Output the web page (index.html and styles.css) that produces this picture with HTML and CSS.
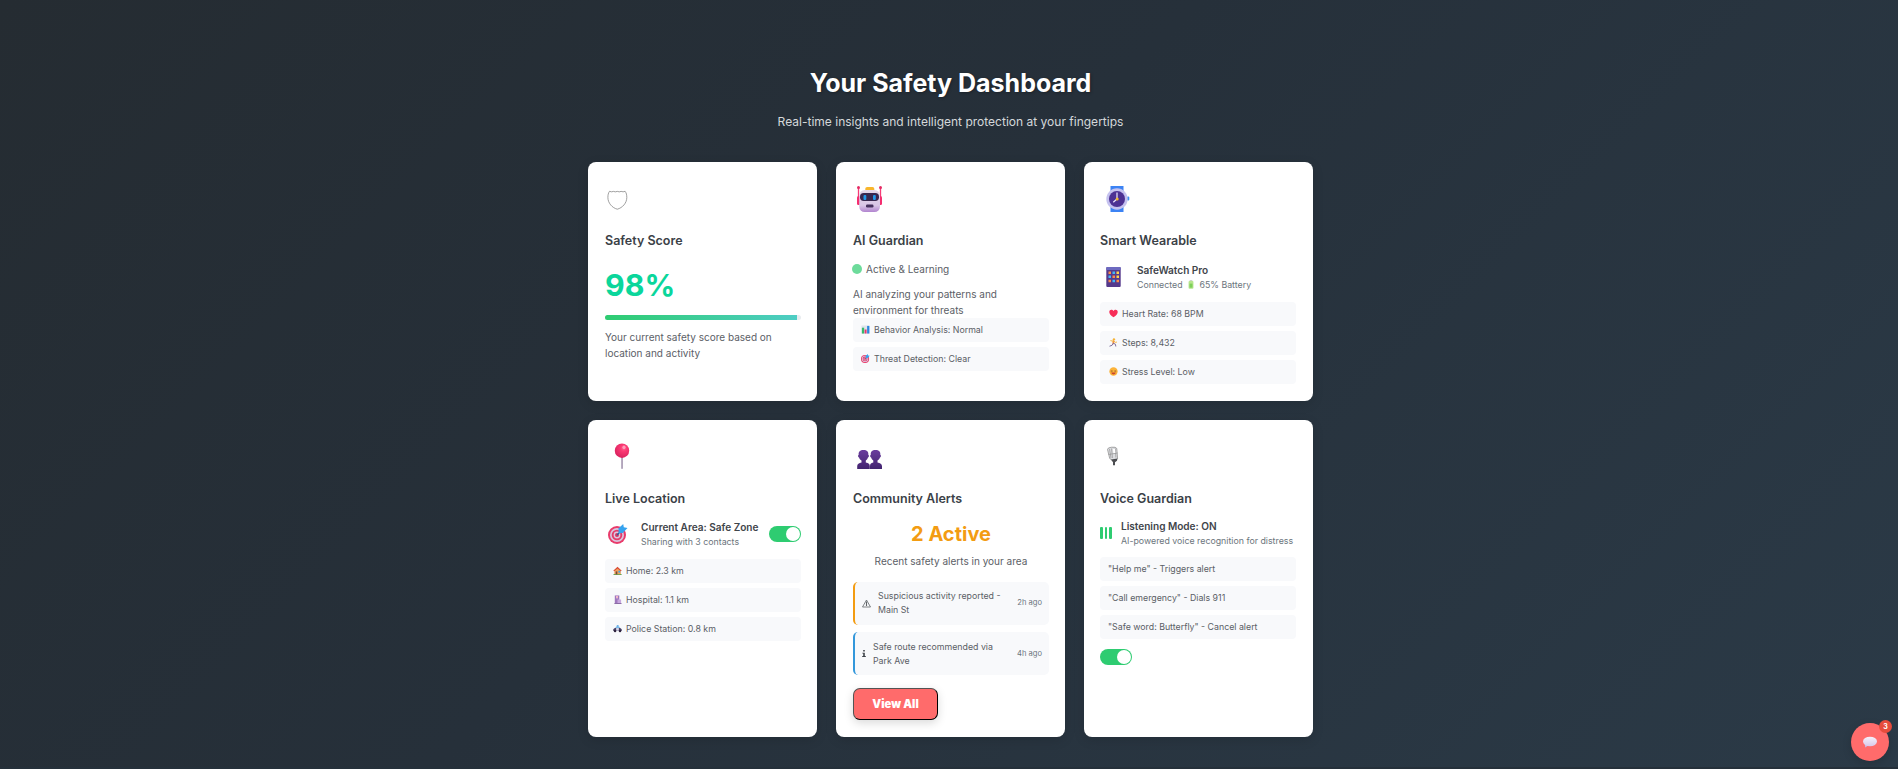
FILE: index.html
```html
<!DOCTYPE html>
<html lang="en">
<head>
<meta charset="utf-8">
<title>Your Safety Dashboard</title>
<link rel="stylesheet" href="styles.css">
</head>
<body>
<main class="dashboard">
  <h1 class="heading"><span>Your Safety Dashboard</span></h1>
  <p class="subheading"><span>Real-time insights and intelligent protection at your fingertips</span></p>
  <div class="grid">
    <section class="card">
      <div class="card-icon"><svg width="26" height="40" viewBox="0 0 26 40" fill="none" stroke="#777" stroke-width=".7"><path d="M4.500 12.300q2 1 4 .1q1.800.9 3.800 0q2 .9 3.800 0q2 .9 4-.1C21.400 14 21.800 16 21.800 18.500c0 5.500-4.300 10.300-9.500 11.700C7.100 28.800 2.900 24 2.900 18.500c0-2.500.4-4.500 1.600-6.200z"/></svg></div>
      <h2 class="card-title">Safety Score</h2>
      <div class="score">98%</div>
      <div class="progress"><div class="progress-fill" style="width:98%"></div></div>
      <p class="copy">Your current safety score based on location and activity</p>
    </section>

    <section class="card">
      <div class="card-icon"><svg width="30" height="40" viewBox="0 0 30 40"><defs><linearGradient id="rb" x1="0" y1="0" x2="0" y2="1"><stop offset="0" stop-color="#e3d8ea"/><stop offset=".7" stop-color="#d9c5e6"/><stop offset="1" stop-color="#b184cf"/></linearGradient></defs><path d="M5.500 9v17M27.500 9v17" stroke="#f53b76" stroke-width="1.300"/><circle cx="5.500" cy="8.500" r="1.500" fill="#e52b63"/><circle cx="27.500" cy="8.500" r="1.500" fill="#e52b63"/><rect x="4" y="17" width="3.500" height="9" rx="1.500" fill="#f42e70"/><rect x="25.500" y="17" width="3.500" height="9" rx="1.500" fill="#f42e70"/><rect x="12.300" y="8" width="9" height="5" rx="1.800" fill="#f8b62c"/><rect x="6.200" y="11" width="20.800" height="22" rx="5.500" fill="url(#rb)"/><rect x="7" y="14" width="19" height="8" rx="3.700" fill="#37274f"/><rect x="10.500" y="16" width="2.800" height="5" rx="1" fill="#2196e8"/><rect x="20" y="16" width="2.800" height="5" rx="1" fill="#2196e8"/><rect x="13" y="25.500" width="7.500" height="3" rx="1.200" fill="#46305e"/></svg></div>
      <h2 class="card-title">AI Guardian</h2>
      <div class="status"><span class="status-dot"></span>Active &amp; Learning</div>
      <p class="copy copy-tight">AI analyzing your patterns and environment for threats</p>
      <ul class="list">
        <li class="item"><svg class="emoji" viewBox="0 0 10 10"><rect x=".5" y=".5" width="9" height="9" rx=".6" fill="#dfe4ec"/><path d="M1 3h2.500v6.500H1z" fill="#37b96b"/><path d="M4 5h2.200v4.500H4z" fill="#e5366f"/><path d="M6.800 1h2.500v8.500H6.800z" fill="#2c86e0"/></svg>Behavior Analysis: Normal</li>
        <li class="item"><svg class="emoji" viewBox="0 0 20 20"><use href="#target"/></svg>Threat Detection: Clear</li>
      </ul>
    </section>

    <section class="card card-last">
      <div class="card-icon"><svg width="32" height="40" viewBox="0 0 32 40"><path d="M10.500 7h13v7h-13zM10.500 26h13v7h-13z" fill="#3c83f4"/><rect x="27" y="17.500" width="2.300" height="4" rx="1" fill="#3d91f2"/><circle cx="17" cy="20" r="10.700" fill="#c5c2ef"/><circle cx="17" cy="20" r="8" fill="#4d3193"/><path d="M17 13.500V20l-3.700 3.300" stroke="#eee6ff" stroke-width="1.200" fill="none"/><circle cx="17.200" cy="20" r="1.500" fill="#efb832"/></svg></div>
      <h2 class="card-title">Smart Wearable</h2>
      <div class="device">
        <svg class="device-icon" width="26" height="22" viewBox="0 0 26 22"><rect x="6.300" y="1" width="14.400" height="20" rx="1" fill="#55398b"/><path d="M6.300 2q0-1 1-1h12.400q1 0 1 1v2H6.300z" fill="#6d6ac0"/><g fill="#fb8a48"><path d="M8.500 5.500h2.500v2.500H8.500zM12.500 9.500H15V12h-2.500zM8.500 13.700h2.500v2.500H8.500zM16.500 13.700H19v2.500h-2.500z"/></g><g fill="#42b8f7"><path d="M12.500 5.500H15V8h-2.500zM8.500 9.500h2.500V12H8.500zM12.500 13.700H15v2.500h-2.500z"/></g><path d="M16.500 5.500H19V8h-2.500zM16.500 9.500H19V12h-2.500z" fill="#ffd24b"/></svg>
        <div><div class="strong">SafeWatch Pro</div><div class="muted">Connected <svg class="battery" viewBox="0 0 8 10"><rect x="2.500" y=".3" width="3" height="1.500" fill="#b8c4b5"/><rect x="1.300" y="1.200" width="5.400" height="8.500" rx="1" fill="#b7e58e"/><path d="M2.400 4h3.200v4.500H2.400z" fill="#7ed05a"/></svg> 65% Battery</div></div>
      </div>
      <ul class="list">
        <li class="item item-wide"><svg class="emoji" viewBox="0 0 10 10"><path d="M5 9.300C2 7.300.3 5.300.3 3.300.3.500 3.800.2 5 2.300 6.200.2 9.700.5 9.700 3.300c0 2-1.700 4-4.700 6z" fill="#f72d58"/></svg>Heart Rate: 68 BPM</li>
        <li class="item item-wide"><svg class="emoji" viewBox="0 0 10 10" fill="none" stroke-linecap="round"><circle cx="5.500" cy="1.500" r="1.300" fill="#f5b335"/><path d="M5 3.500L4.800 6" stroke="#f7913f" stroke-width="2"/><path d="M4.500 3.500L2 3M5.500 3.500l2 1.500 1-.5" stroke="#f5b335"/><path d="M4.700 6L3.500 8 1 9M5.200 6l2 1 .3 2" stroke="#7b6b9c" stroke-width="1.100"/></svg>Steps: 8,432</li>
        <li class="item item-wide"><svg class="emoji" viewBox="0 0 10 10"><circle cx="5" cy="5" r="4.600" fill="#fbb238"/><path d="M2 4.500h2M6 4.500h2" stroke="#6b4226" stroke-width=".8"/><path d="M2.500 6h5q-.5 2.300-2.500 2.300T2.500 6" fill="#c9472f"/></svg>Stress Level: Low</li>
      </ul>
    </section>

    <section class="card">
      <div class="card-icon"><svg width="30" height="40" viewBox="0 0 30 40"><defs><radialGradient id="pin" cx=".62" cy=".32" r=".65"><stop offset="0" stop-color="#ff6390"/><stop offset=".35" stop-color="#fb3a74"/><stop offset="1" stop-color="#dc2561"/></radialGradient></defs><rect x="16.200" y="19" width="1.700" height="13" rx=".8" fill="#a99bb4"/><circle cx="17" cy="13.700" r="7.200" fill="url(#pin)"/><ellipse cx="19" cy="10.300" rx="1.600" ry="1.900" fill="#ff9db9"/></svg></div>
      <h2 class="card-title">Live Location</h2>
      <div class="location">
        <svg class="device-icon" width="26" height="22" viewBox="-3 -1 26 22"><g id="target"><circle cx="9" cy="11" r="9" fill="#e93b6b"/><circle cx="9" cy="11" r="7" fill="#d9c7de"/><circle cx="9" cy="11" r="5.300" fill="#e33c6b"/><circle cx="9" cy="11" r="3.400" fill="#dcc7df"/><circle cx="9" cy="11" r="2" fill="#d83564"/><path d="M9 11l6-6" stroke="#23659f" stroke-width="1.200"/><path d="M10.800 9.200l-.4-4.700L15.200 0l.6 3.200 3.700.9-4.700 5z" fill="#35a3ef"/></g></svg>
        <div class="grow"><div class="strong">Current Area: Safe Zone</div><div class="muted">Sharing with 3 contacts</div></div>
        <span class="toggle"></span>
      </div>
      <ul class="list list-location">
        <li class="item"><svg class="emoji" viewBox="0 0 10 10"><path d="M1 9h8.500v.9H.2z" fill="#52a552"/><path d="M1.500 4.500L5 2l3.700 2.500V9.300H1.500z" fill="#f1a15b"/><path d="M.3 5.300L5 .7l4.700 4.600-1 .6L5 2.800 1.300 5.900z" fill="#d94b36"/><path d="M3 6h1.800v3.300H3z" fill="#6f483a"/><path d="M6 5.300h2v2H6z" fill="#3ca6ed"/></svg>Home: 2.3 km</li>
        <li class="item"><svg class="emoji" viewBox="0 0 10 10"><path d="M2 .5h5v8.800H2z" fill="#9f77bd"/><path d="M5 5h4v4.500H5z" fill="#c7a8de"/><path d="M3.500 1h2v2.500h-2z" fill="#fff"/><path d="M4.100 1.200h.8v2h-.8z" fill="#e94874"/><path d="M1.500 9h8v.8h-8z" fill="#6e4a8d"/></svg>Hospital: 1.1 km</li>
        <li class="item"><svg class="emoji" viewBox="0 0 10 10"><path d="M4.200 1.500h2v1.500h-2z" fill="#248de2"/><path d="M2 5L3.500 2.800h3.300L8.500 5z" fill="#79b9e8"/><path d="M.3 5.700L2 4.500h6l1.700 1.300v2H.3z" fill="#4a4268"/><path d="M3.500 4.500h3v3h-3z" fill="#d9d7e8"/><circle cx="2.300" cy="7.900" r="1.400" fill="#30253f"/><circle cx="7.800" cy="7.900" r="1.400" fill="#30253f"/></svg>Police Station: 0.8 km</li>
      </ul>
    </section>

    <section class="card">
      <div class="card-icon"><svg width="30" height="40" viewBox="0 0 30 40"><defs><linearGradient id="pp" x1="0" y1="0" x2="0" y2="1"><stop offset="0" stop-color="#6a3c9e"/><stop offset="1" stop-color="#42246f"/></linearGradient></defs><g fill="url(#pp)"><path d="M4.200 32v-2.800c0-2 1.800-2.800 4.300-3.600v-2C6.900 22.800 6.200 21 6 20.500c-1.200-.3-1.200-2.500-.3-2.700C5.300 15 7 13 10.500 13s5.200 2 4.800 4.800c.9.200.9 2.400-.3 2.700-.2.500-.9 2.300-2.200 3.100v2c2.900.7 4 1.600 4 3.600V32z"/><path d="M17 32v-2.800c0-2 .8-2.900 3.300-3.600v-2c-1.300-.8-2-2.600-2.200-3.100-1.200-.3-1.200-2.500-.3-2.700C17.400 15 19 13 22.500 13s5.200 2 4.800 4.800c.9.200.9 2.400-.3 2.700-.2.500-.9 2.300-2.500 3.100v2c2.700.8 4.500 1.600 4.500 3.600V32z"/></g></svg></div>
      <h2 class="card-title">Community Alerts</h2>
      <div class="alert-count">2 Active</div>
      <p class="copy alert-copy">Recent safety alerts in your area</p>
      <div class="alert alert-warn"><svg width="9" height="9" viewBox="0 0 9 9" fill="none" stroke="#606468"><path d="M4.500 1L8.500 8H.5z" stroke-width=".8"/><path d="M4.500 2.500v4.500" stroke-width="1.100"/></svg><p>Suspicious activity reported - Main St</p><time>2h ago</time></div>
      <div class="alert alert-info"><svg width="4" height="9" viewBox="0 0 4 9" fill="#3c4248"><path d="M1.200 1h1.600v1.500H1.200zM.3 3.700h2.500V7h1v1H.2V7h1V4.600H.3z"/></svg><p>Safe route recommended via Park Ave</p><time>4h ago</time></div>
      <button class="view-all">View All</button>
    </section>

    <section class="card card-last">
      <div class="card-icon"><svg width="26" height="40" viewBox="0 0 26 40"><path d="M7.500 12.500q0-2 4-2.300 4.500-.5 5.300 1.300l.8 10q-1.600 2.500-5 2.300L9.700 21.500z" fill="#dcdde0" stroke="#777" stroke-width=".6"/><path d="M9.500 12l1.500 9M11.500 11.500l1 9.500M15.300 11.500l.6 9M8.500 17.500l9-1.500" stroke="#888" stroke-width=".6"/><path d="M13 12h2l.4 4h-2z" fill="#fff"/><path d="M11 22.500l6.500-1-.5 2.300-2 1.500v3h-2v-3z" fill="#4b4d50"/></svg></div>
      <h2 class="card-title">Voice Guardian</h2>
      <div class="voice">
        <div class="bars"><i></i><i></i><i></i></div>
        <div><div class="strong">Listening Mode: ON</div><div class="muted">AI-powered voice recognition for distress</div></div>
      </div>
      <ul class="list list-voice">
        <li class="item">"Help me" - Triggers alert</li>
        <li class="item">"Call emergency" - Dials 911</li>
        <li class="item">"Safe word: Butterfly" - Cancel alert</li>
      </ul>
      <span class="toggle"></span>
    </section>
  </div>
</main>
<button class="chat" aria-label="Chat"><svg width="16" height="14" viewBox="0 0 16 14"><defs><linearGradient id="bubble" x1="0" y1="0" x2="0" y2="1"><stop offset="0" stop-color="#f6f0fa"/><stop offset="1" stop-color="#d9c9ea"/></linearGradient></defs><path d="M2.800 9l.4 3.500L7 10z" fill="#cdb6e2"/><ellipse cx="8" cy="6.500" rx="7" ry="4.800" fill="url(#bubble)"/></svg><span class="badge">3</span></button>
</body>
</html>
```
FILE: styles.css
```css
* { box-sizing: border-box; margin: 0; padding: 0; }
body { height: 769px; padding-left: 3px; overflow: hidden; font-family: Inter, "Liberation Sans", sans-serif; color: #5b6066; border-bottom: 2px solid #25303a; background: linear-gradient(135deg, #252c32 0%, #26303a 45%, #2b3a47 100%); }
.dashboard { width: 725px; margin: 0 auto; padding-top: 64px; }
.heading { height: 38px; line-height: 38px; text-align: center; font-size: 25px; font-weight: 700; color: #fff; text-shadow: 1px 1px 3px rgba(0,0,0,.3); }
.subheading { height: 16px; line-height: 16px; margin-top: 12px; text-align: center; font-size: 12.030px; color: #d4d8da; }
.grid { display: grid; grid-template-columns: repeat(3, minmax(0, 1fr)); grid-template-rows: 239px 317px; gap: 19px; margin-top: 32px; }
.card { background: #fff; border-radius: 8px; padding: 17px 16px 17px 17px; box-shadow: 0 3px 12px rgba(0,0,0,.12); }
.card-last { padding: 17px 17px 17px 16px; }
.card-icon { height: 40px; }
.card-icon svg { display: block; }
.card-title { height: 20px; line-height: 20px; margin-top: 12px; font-size: 12.500px; font-weight: 600; color: #3b4147; }
.score { height: 38px; line-height: 36px; margin-top: 16px; font-size: 30.300px; font-weight: 700; color: #0bd69b; }
.progress { height: 5px; margin-top: 10px; background: #e9ecef; border-radius: 3px; overflow: hidden; }
.progress-fill { height: 100%; background: linear-gradient(90deg, #2ecc71, #4ecdc4); }
.copy { margin-top: 9px; font-size: 10.030px; line-height: 16px; }
.status { display: flex; align-items: center; gap: 4px; height: 16px; margin-top: 10px; margin-left: -1px; font-size: 10.030px; }
.status-dot { width: 10px; height: 10px; border-radius: 50%; background: #6ddb9b; }
.copy-tight { margin-top: 9px; }
.list { list-style: none; display: grid; gap: 5px; }
.item { display: flex; align-items: center; gap: 4px; height: 24px; padding: 0 8px 1px; border-radius: 4px; background: #f8f9fb; font-size: 8.800px; }
.item-wide { padding-left: 9px; }
.emoji { width: 9px; height: 9px; flex: none; }
.device { display: flex; align-items: center; gap: 11px; height: 32px; margin-top: 10px; margin-bottom: 9px; }
.device-icon { flex: none; }
.strong { font-size: 10.050px; line-height: 15px; font-weight: 600; color: #3f454b; white-space: nowrap; }
.muted { font-size: 8.800px; line-height: 14px; color: #6c757d; white-space: nowrap; }
.battery { width: 8px; height: 9px; margin: 0 2px; vertical-align: -1px; }
.location { display: flex; align-items: center; gap: 10px; height: 32px; margin-top: 9px; }
.grow { flex: 1; }
.toggle { display: block; flex: none; width: 32px; height: 16px; padding: 1px; border-radius: 8px; background: #2ecc71; }
.toggle::after { content: ""; display: block; width: 14px; height: 14px; margin-left: 16px; border-radius: 50%; background: #fff; }
.list-location { margin-top: 9px; }
.alert-count { height: 24px; line-height: 26px; margin-top: 12px; text-align: center; font-size: 20px; font-weight: 700; color: #f39c12; }
.alert-copy { margin-top: 8px; text-align: center; }
.alert { display: flex; align-items: center; gap: 7px; height: 43px; padding: 0 7px; border-left: 2px solid #f39c12; border-radius: 5px; background: #f8f9fb; font-size: 8.800px; line-height: 14px; }
.alert p { flex: 1; padding-bottom: 1px; }
.alert time { font-size: 7.600px; padding-bottom: 1px; color: #6c757d; }
.alert svg { flex: none; }
.alert-warn { margin-top: 13px; }
.alert-info { margin-top: 7px; border-left-color: #3498db; }
.alert-info p { padding: 1px 0 0; }
.alert-info time { padding: 1px 0 0; }
.view-all { display: block; width: 85px; height: 32px; margin-top: 13px; border: 1px outset #000; border-radius: 7px; background: #ff6b6b; color: #fff; font: 900 11.200px Inter, "Liberation Sans", sans-serif; box-shadow: 0 3px 10px rgba(0,0,0,.15); }
.voice { display: flex; align-items: center; gap: 9px; height: 32px; margin-top: 8px; }
.bars { display: flex; gap: 2px; }
.bars i { width: 3px; height: 12px; border-radius: 1px; background: #2ecc71; }
.bars i:nth-child(2) { width: 2px; }
.list-voice { margin: 8px 0 10px; }
.chat { position: fixed; right: 9px; bottom: 8px; display: flex; align-items: center; justify-content: center; width: 38px; height: 38px; border: 0; border-radius: 50%; background: #ff6b6b; box-shadow: 0 3px 10px rgba(0,0,0,.15); }
.badge { position: absolute; top: -3px; right: -3px; width: 13px; height: 13px; border-radius: 50%; background: #e74c3c; color: #fff; font: 700 7px/13px Inter, sans-serif; }
```
